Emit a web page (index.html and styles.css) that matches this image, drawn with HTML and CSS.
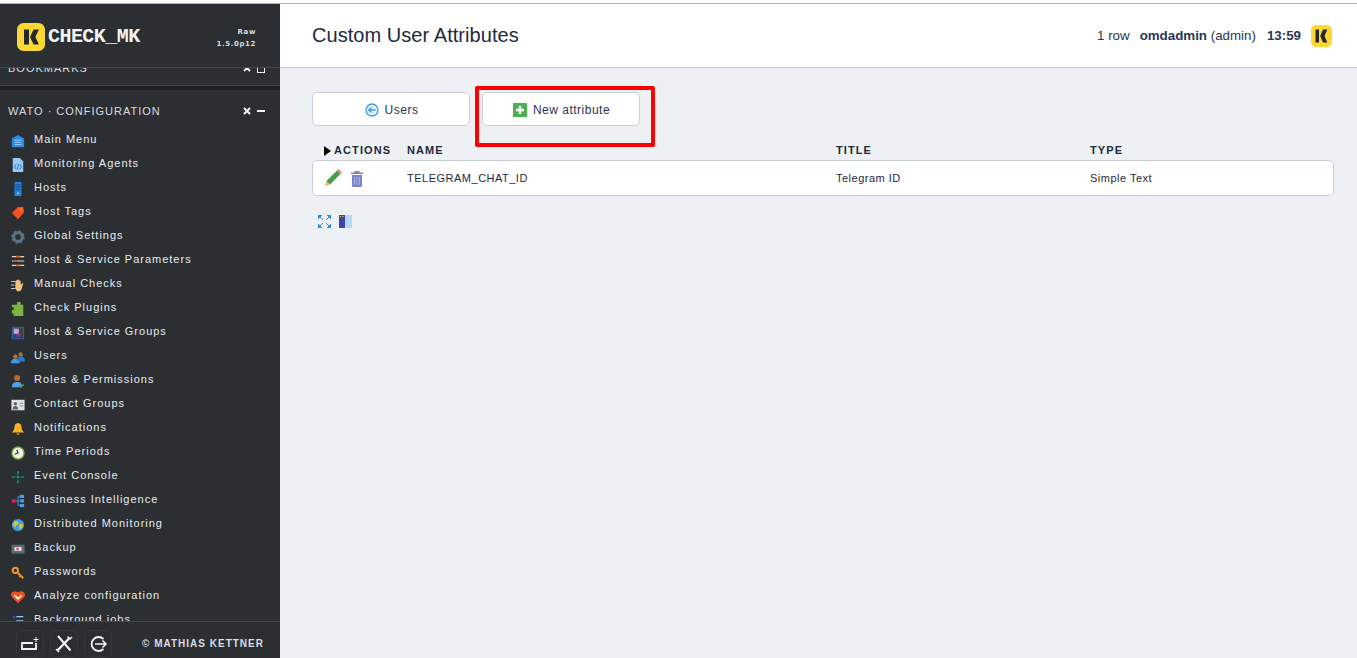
FILE: index.html
```html
<!DOCTYPE html>
<html lang="en">
<head>
    <meta charset="UTF-8">
    <title>Custom User Attributes</title>
    <link rel="stylesheet" href="styles.css">
</head>
<body>
    <div class="topline"></div>
    <div class="page">
        <aside class="sidebar">
            <div class="side-head">
                <svg class="logo" viewBox="0 0 28 28" width="28" height="28">
                    <rect width="28" height="28" rx="6.500" fill="#fdd835"/>
                    <path d="M7 6.500h4.500a.5.5 0 0 1 .5.5v14a.5.5 0 0 1-.5.5H7zM13 14l3.600-7.500H22l-3.600 7.500 3.600 7.500h-5.400z" fill="#23282a"/>
                </svg>
                <div class="logo-text">CHECK<span class="logo-us">_</span>MK</div>
                <div class="version">Raw<br>1.5.0p12</div>
            </div>

            <div class="side-scroll">
                <div class="snapin snapin-bookmarks">
                    <div class="snapin-title">
                        <span>BOOKMARKS</span>
                        <span class="snapin-ctl">
                            <svg class="ctl-x" viewBox="0 0 8 8" width="8" height="8"><path d="M1 1l6 6M7 1L1 7" stroke="#f4f4f4" stroke-width="2"/></svg>
                            <i class="ctl-square"></i>
                        </span>
                    </div>
                </div>
                <div class="snapin">
                    <div class="snapin-title">
                        <span>WATO · CONFIGURATION</span>
                        <span class="snapin-ctl">
                            <svg class="ctl-x" viewBox="0 0 8 8" width="8" height="8"><path d="M1 1l6 6M7 1L1 7" stroke="#f4f4f4" stroke-width="2"/></svg>
                            <i class="ctl-dash"></i>
                        </span>
                    </div>
                    <ul class="menu">
                        <li><svg viewBox="0 0 16 16"><path d="M8 1l7 4v9a1 1 0 0 1-1 1H2a1 1 0 0 1-1-1V5z" fill="#2a8ae8"/><path d="M4 7h8M4 9.500h8M4 12h8" stroke="#a6d2fa"/></svg>Main Menu</li>
                        <li><svg viewBox="0 0 16 16"><path d="M2 0h8l4 4v12H2z" fill="#9cc8f5"/><path d="M6 7L4 10l2 3M10 7l2 3-2 3M8.800 7l-1.600 6" fill="none" stroke="#1f6fc4"/></svg>Monitoring Agents</li>
                        <li><svg viewBox="0 0 16 16"><rect x="4" y="0" width="8" height="16" fill="#2484e0"/><path d="M5 3h6M5 5h6M5 7h6M5 9h6" stroke="#0f4f96"/><circle cx="8" cy="13" r="1" fill="#cfe6fb"/></svg>Hosts</li>
                        <li><svg viewBox="0 0 16 16"><path d="M1 8l7-7h6l1 6-7 8z" fill="#f4511e"/><circle cx="11.500" cy="4" r="1" fill="#ffb199"/></svg>Host Tags</li>
                        <li><svg viewBox="0 0 16 16"><circle cx="8" cy="8" r="5" fill="none" stroke="#5b7284" stroke-width="3.500"/><circle cx="8" cy="8" r="6.500" fill="none" stroke="#5b7284" stroke-width="2.500" stroke-dasharray="2.500 2.600"/></svg>Global Settings</li>
                        <li><svg viewBox="0 0 16 16"><path d="M1 3h5M10 3h5M1 8h2M7 8h8M1 13h5M10 13h5" stroke="#d8dadc" stroke-width="1.300"/><path d="M6 3h5M3 8h5M6 13h5" stroke="#f4622a" stroke-width="1.800"/></svg>Host &amp; Service Parameters</li>
                        <li><svg viewBox="0 0 16 16"><path d="M0 4h5M0 8h4M0 12h5" stroke="#d8dadc"/><path d="M5 7V3h1.500v3-4H8v4-4h1.500v4-3H11v5l1.500-2L14 6l-2 7-2 2H7l-2-3z" fill="#f7c27c"/></svg>Manual Checks</li>
                        <li><svg viewBox="0 0 16 16"><path d="M5 3h2V0h4v3h3v13H3v-3H1v-4h2V6H1V3z" fill="#7cb342"/></svg>Check Plugins</li>
                        <li><svg viewBox="0 0 16 16"><rect x="1.500" y="1.500" width="13" height="13" fill="#3d4044" stroke="#1d6fc0"/><rect x="3" y="3" width="6" height="6" fill="#c9a0dc"/><path d="M5 12l4-4 3 4z" fill="#9c27b0"/></svg>Host &amp; Service Groups</li>
                        <li><svg viewBox="0 0 16 16"><circle cx="5" cy="7.500" r="2.500" fill="#c96f2c"/><path d="M0 15c0-4 2-5 5-5s5 1 5 5z" fill="#3f9be8"/><circle cx="11" cy="5" r="2.500" fill="#a9713f"/><path d="M7 12c0-3 2-5 4-5s5 1 5 6H9z" fill="#2a78c4"/></svg>Users</li>
                        <li><svg viewBox="0 0 16 16"><circle cx="7" cy="4.500" r="3.500" fill="#b9682b"/><path d="M1 15c0-5 3-6 6-6s6 1 6 6z" fill="#4aa3ec"/><path d="M9 13l2 2 4-3" fill="none" stroke="#43a047" stroke-width="1.500"/></svg>Roles &amp; Permissions</li>
                        <li><svg viewBox="0 0 16 16"><rect x="0.500" y="2" width="15" height="12" fill="#dfe3e7"/><circle cx="5" cy="6.500" r="2" fill="#5a6470"/><path d="M2 13c0-3 1-4 3-4s3 1 3 4z" fill="#5a6470"/><path d="M10 6h4M10 9h4" stroke="#6d7884"/></svg>Contact Groups</li>
                        <li><svg viewBox="0 0 16 16"><path d="M8 1c3 0 4 2.500 4 5s1 4 3 6H1c2-2 3-3.500 3-6s1-5 4-5z" fill="#fbb024"/><path d="M6 13h4l-2 2z" fill="#fbb024"/></svg>Notifications</li>
                        <li><svg viewBox="0 0 16 16"><circle cx="8" cy="8" r="7" fill="#eef3e6" stroke="#6fa544" stroke-width="1.500"/><path d="M8 4v4H4" transform="rotate(-20 8 8)" fill="none" stroke="#2c3033" stroke-width="1.300"/></svg>Time Periods</li>
                        <li><svg viewBox="0 0 16 16"><path d="M8 1v4M8 11v4M1 8h4M11 8h4" stroke="#1c8a7c" stroke-width="1.800"/><circle cx="8" cy="8" r="1.800" fill="#1c8a7c"/></svg>Event Console</li>
                        <li><svg viewBox="0 0 16 16"><rect x="1" y="6" width="4" height="4" fill="#e91e63"/><path d="M5 8h4M8 3v10M8 3h2M8 13h2" stroke="#4b9be8"/><rect x="10" y="1" width="5" height="3.500" fill="#4b9be8"/><rect x="10" y="6" width="5" height="3.500" fill="#4b9be8"/><rect x="10" y="11.500" width="5" height="3.500" fill="#4b9be8"/></svg>Business Intelligence</li>
                        <li><svg viewBox="0 0 16 16"><circle cx="8" cy="8" r="7" fill="#3f9be8"/><path d="M4 3l4 1 1 3-3 1-1 3-3-3zM11 6l3 1-1 4-3 2-1-4z" fill="#d7c23c"/></svg>Distributed Monitoring</li>
                        <li><svg viewBox="0 0 16 16"><rect x="0.500" y="3" width="15" height="10" rx="1" fill="#5e6a74"/><rect x="4" y="6" width="8" height="4" fill="#eceff1"/><rect x="6" y="7" width="3" height="2" fill="#e53935"/></svg>Backup</li>
                        <li><svg viewBox="0 0 16 16"><circle cx="5" cy="5" r="3" fill="none" stroke="#f4972a" stroke-width="2.200"/><path d="M7.500 7.500l6.500 6.500M11 11l-1.500 1.500" stroke="#f4972a" stroke-width="2.200"/></svg>Passwords</li>
                        <li><svg viewBox="0 0 16 16"><path d="M8 15L1 8a3.800 3.800 0 0 1 0-5c2-2 5-2 7 0 2-2 5-2 7 0a3.800 3.800 0 0 1 0 5z" fill="#f4511e"/><path d="M4 6l4 4 4-4" fill="none" stroke="#fff" stroke-width="2"/></svg>Analyze configuration</li>
                        <li><svg viewBox="0 0 16 16"><rect x="2" y="2" width="3" height="3" fill="#3949ab"/><path d="M6 3h8M6 8h8" stroke="#9cc8f5" stroke-width="1.500"/></svg>Background jobs</li>
                    </ul>
                </div>
            </div>

            <div class="side-foot">
                <div class="foot-icons">
                    <span class="foot-btn"><svg viewBox="0 0 20 20" width="20" height="20"><path d="M16 9v6H2V9h11" fill="none" stroke="#f2f2f2" stroke-width="1.800"/><path d="M16 3v5M13.500 5.500h5" stroke="#f2f2f2"/></svg></span>
                    <span class="foot-btn"><svg viewBox="0 0 20 20" width="20" height="20"><path d="M4 2l12.500 14.500" stroke="#f2f2f2" stroke-width="2"/><path d="M15 4.500L3.500 16.500" stroke="#f2f2f2" stroke-width="2.400"/><path d="M13.500 2.500L16 5l2-2" fill="none" stroke="#f2f2f2" stroke-width="1.500"/><path d="M2 15l3 3" stroke="#f2f2f2" stroke-width="1.500"/></svg></span>
                    <span class="foot-btn"><svg viewBox="0 0 20 20" width="20" height="20"><path d="M15.500 5a7 7 0 1 0 0 10" fill="none" stroke="#f2f2f2" stroke-width="1.800"/><path d="M7 10h11M14.500 6.500L18 10l-3.500 3.500" fill="none" stroke="#f2f2f2" stroke-width="1.500"/></svg></span>
                </div>
                <span class="copyright">© MATHIAS KETTNER</span>
            </div>
        </aside>

        <main class="main">
            <header class="main-head">
                <h1>Custom User Attributes</h1>
                <div class="status">
                    <span>1 row</span>
                    <span class="user"><b>omdadmin</b> (admin)</span>
                    <b class="clock">13:59</b>
                    <svg viewBox="0 0 21 22" width="21" height="22">
                        <rect width="21" height="22" rx="5" fill="#fdd835"/>
                        <path d="M4.500 4.500h3.500v13H4.500zM9.200 11l2.800-6.500h4.300L13.500 11l2.800 6.500H12z" fill="#23282a"/>
                    </svg>
                </div>
            </header>

            <div class="content">
                <div class="buttons">
                    <a class="button">
                        <svg viewBox="0 0 14 14" width="14" height="14"><circle cx="7" cy="7" r="6" fill="#e3f1fd" stroke="#3b9be8" stroke-width="1.300"/><path d="M3.500 7h7M6.500 4.500L3.800 7l2.700 2.500" fill="none" stroke="#3b9be8" stroke-width="1.300"/></svg>
                        <span>Users</span>
                    </a>
                    <a class="button">
                        <svg viewBox="0 0 14 14" width="14" height="14"><rect width="14" height="14" fill="#4caf50"/><path d="M7 3v8M3 7h8" stroke="#fff" stroke-width="2.500"/></svg>
                        <span>New attribute</span>
                        <span class="highlight"></span>
                    </a>
                </div>

                <div class="row head-row">
                    <div class="col-actions"><span class="sort-arrow"></span>ACTIONS</div>
                    <div class="col-name">NAME</div>
                    <div class="col-title">TITLE</div>
                    <div class="col-type">TYPE</div>
                </div>
                <div class="row data-row">
                    <div class="col-actions">
                        <svg viewBox="0 0 18 18" width="18" height="18"><path d="M1.500 16.500l1-4.500L13 1.500 16.500 5 6 15.500z" fill="#43a047"/><path d="M13 1.500L14.500 0 18 3.500 16.500 5z" fill="#ef7d8b"/><path d="M1 17l1.500-5 3.500 3.500z" fill="#e8c06a"/></svg>
                        <svg viewBox="0 0 14 17" width="14" height="17"><path d="M1 2.500h12V4H1zM4.500 1h5v2h-5z" fill="#7986cb"/><path d="M2 5h10v10.500a1.500 1.500 0 0 1-1.500 1.500h-7A1.500 1.500 0 0 1 2 15.500z" fill="#7986cb"/><path d="M4.500 7v8M7 7v8M9.500 7v8" stroke="#aab3e0"/></svg>
                    </div>
                    <div class="col-name">TELEGRAM_CHAT_ID</div>
                    <div class="col-title">Telegram ID</div>
                    <div class="col-type">Simple Text</div>
                </div>

                <div class="table-tools">
                    <svg viewBox="0 0 13 13" width="13" height="13"><path d="M0 0h4L0 4zM13 0v4L9 0zM0 13V9l4 4zM13 13H9l4-4zM2 2l3 3M11 2L8 5M2 11l3-3M11 11L8 8" fill="#2b8de8" stroke="#2b8de8" stroke-width="1"/></svg>
                    <svg viewBox="0 0 13 13" width="13" height="13"><rect width="6" height="13" fill="#3949ab"/><rect x="6" width="7" height="13" fill="#b5d8f7"/><rect x="1" y="1" width="1" height="1" fill="#fdd835"/><rect x="3.500" y="1" width="1" height="1" fill="#fdd835"/></svg>
                </div>
            </div>
        </main>
    </div>
</body>
</html>
```

FILE: styles.css
```css
html, body {
    margin: 0;
    height: 100%;
    overflow: hidden;
}
body {
    font-family: "Liberation Sans", Arial, sans-serif;
    background-color: #eef1f4;
    color: #1e2a3c;
    display: flex;
    flex-direction: column;
}
.topline {
    height: 3px;
    background-color: #fff;
    border-bottom: 1px solid #b4b4b4;
    flex: none;
}
.page {
    flex: 1;
    display: flex;
    min-height: 0;
}

/* sidebar */
.sidebar {
    width: 280px;
    flex: none;
    background-color: #2b2f31;
    display: flex;
    flex-direction: column;
    color: #e8eaf0;
}
.side-head {
    height: 63px;
    flex: none;
    display: flex;
    align-items: center;
    padding: 0 24px 0 17px;
    border-bottom: 1px solid #44484b;
}
.logo {
    flex: none;
    position: relative;
    top: 1px;
}
.logo-text {
    font-family: "Liberation Mono", monospace;
    font-weight: bold;
    font-size: 20px;
    letter-spacing: -0.55px;
    color: #f4f4f4;
    margin-left: 3px;
    padding-top: 2px;
}
.logo-us {
    color: #fdd835;
}
.version {
    margin-left: auto;
    padding-top: 4px;
    text-align: right;
    font-family: "DejaVu Sans", sans-serif;
    font-weight: bold;
    font-size: 7px;
    line-height: 12px;
    letter-spacing: 0.6px;
    color: #d8dade;
}
.side-scroll {
    flex: 1;
    min-height: 0;
    overflow: hidden;
}
.snapin-bookmarks {
    margin-top: -16px;
    padding-bottom: 9px;
    border-bottom: 1px solid #44484b;
}
.snapin-title {
    display: flex;
    justify-content: space-between;
    align-items: center;
    height: 16px;
    padding: 8px 15px 0 8px;
    font-size: 11px;
    letter-spacing: 1px;
    color: #d8dce4;
}
.snapin:not(.snapin-bookmarks) {
    border-top: 4px solid #1c1f20;
    padding-top: 5px;
}
.snapin-ctl {
    display: flex;
    align-items: center;
    gap: 6px;
}
.ctl-dash {
    width: 8px;
    height: 2px;
    background-color: #f4f4f4;
}
.ctl-square {
    width: 6px;
    height: 6px;
    border: 1px solid #f4f4f4;
    border-top-width: 2px;
}
.menu {
    list-style: none;
    margin: 8px 0 0;
    padding: 0 0 0 11px;
}
.menu li {
    height: 24px;
    display: flex;
    align-items: center;
    gap: 9px;
    font-size: 11px;
    letter-spacing: 1px;
    color: #e8eaf0;
}
.menu svg {
    width: 14px;
    height: 14px;
    flex: none;
    position: relative;
    top: 2px;
}
.side-foot {
    height: 37px;
    flex: none;
    box-sizing: border-box;
    display: flex;
    align-items: flex-start;
    border-top: 1px solid #44484b;
    padding: 8px 16px 0 16px;
}
.foot-icons {
    display: flex;
    gap: 6px;
}
.foot-btn {
    width: 28px;
    height: 28px;
    box-sizing: border-box;
    display: flex;
    align-items: center;
    justify-content: center;
    border: 1px solid #35393b;
    border-radius: 6px;
}
.copyright {
    margin-left: auto;
    font-size: 10px;
    line-height: 28px;
    font-weight: bold;
    letter-spacing: 1px;
    color: #d8dce4;
}

/* main */
.main {
    flex: 1;
    min-width: 0;
}
.main-head {
    height: 63px;
    background-color: #fff;
    border-bottom: 1px solid #c8ccd0;
    display: flex;
    align-items: center;
    justify-content: space-between;
    padding: 0 25px 0 32px;
}
h1 {
    margin: 0;
    font-size: 20px;
    font-weight: normal;
    letter-spacing: 0.05px;
    color: #1e2a3c;
}
.status {
    display: flex;
    align-items: center;
    font-size: 13.33px;
    color: #2a3550;
}
.user {
    margin-left: 10px;
}
.clock {
    margin-left: 11px;
    margin-right: 10px;
}
.content {
    padding: 24px 23px 0 32px;
}
.buttons {
    display: flex;
    gap: 12px;
}
.button {
    position: relative;
    width: 158px;
    height: 34px;
    box-sizing: border-box;
    padding: 1px 0 0 1px;
    display: flex;
    align-items: center;
    justify-content: center;
    gap: 6px;
    background-color: #fff;
    border: 1px solid #c8ccd8;
    border-radius: 5px;
    font-size: 12px;
    letter-spacing: 0.5px;
    color: #2a3550;
}
.highlight {
    position: absolute;
    left: -8px;
    top: -7px;
    width: 180px;
    height: 61px;
    box-sizing: border-box;
    border: 4px solid #f00;
    border-radius: 2px;
}
.row {
    display: flex;
    align-items: center;
}
.head-row {
    height: 34px;
    box-sizing: border-box;
    padding-top: 14px;
    font-size: 11px;
    font-weight: bold;
    letter-spacing: 1.1px;
    color: #1e2a3c;
}
.data-row {
    height: 36px;
    box-sizing: border-box;
    background-color: #fff;
    border: 1px solid #c8ccd8;
    border-radius: 5px;
    font-size: 11px;
    letter-spacing: 0.5px;
}
.col-actions {
    width: 94px;
    flex: none;
    box-sizing: border-box;
    padding-left: 11px;
    display: flex;
    align-items: center;
    gap: 8px;
}
.head-row .col-actions {
    width: 95px;
    padding-left: 12px;
    gap: 3px;
}
.sort-arrow {
    width: 0;
    height: 0;
    position: relative;
    top: 1px;
    border-left: 7px solid #000;
    border-top: 5px solid transparent;
    border-bottom: 5px solid transparent;
}
.col-name {
    width: 429px;
    flex: none;
}
.col-title {
    width: 254px;
    flex: none;
}
.table-tools {
    display: flex;
    gap: 8px;
    padding: 19px 0 0 6px;
}
```
